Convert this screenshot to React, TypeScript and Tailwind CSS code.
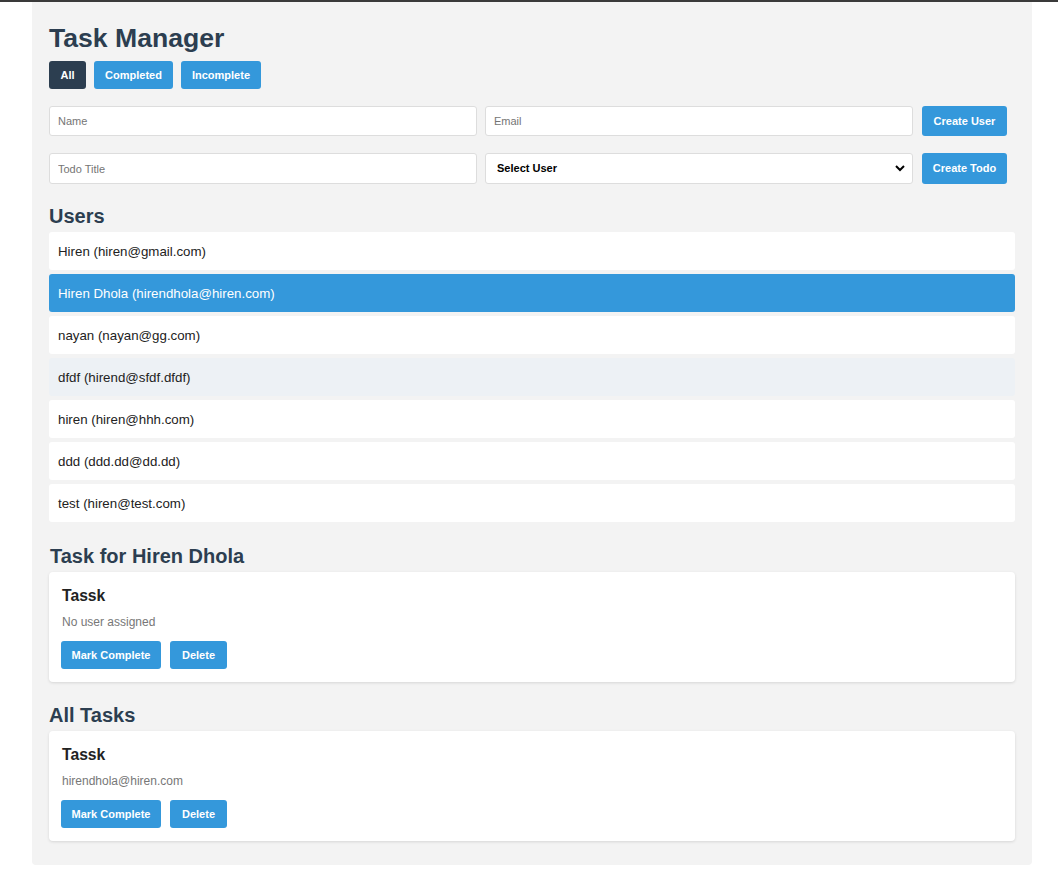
import { useState } from "react";

const users = [
  { name: "Hiren", email: "hiren@gmail.com" },
  { name: "Hiren Dhola", email: "hirendhola@hiren.com" },
  { name: "nayan", email: "nayan@gg.com" },
  { name: "dfdf", email: "hirend@sfdf.dfdf" },
  { name: "hiren", email: "hiren@hhh.com" },
  { name: "ddd", email: "ddd.dd@dd.dd" },
  { name: "test", email: "hiren@test.com" },
];

const btn =
  "h-[28px] rounded-[3px] bg-[#3498db] text-[11px] font-bold text-white";

const filters = [
  { label: "All", w: "w-[37px]" },
  { label: "Completed", w: "w-[79px]" },
  { label: "Incomplete", w: "w-[80px]" },
];

function TaskCard({ title, sub }: { title: string; sub: string }) {
  return (
    <div className="rounded-[4px] bg-white px-[12px] pt-[14px] pb-[13px] shadow-[0_1px_3px_rgba(0,0,0,0.12)]">
      <h3 className="pl-[1px] text-[15.7px] leading-[19px] font-bold text-[#222]">{title}</h3>
      <p className="mt-[10px] pl-[1px] text-[12px] leading-[14px] text-[#777]">{sub}</p>
      <div className="mt-[12px] flex gap-[9px]">
        <button className={btn + " w-[100px]"}>Mark Complete</button>
        <button className={btn + " w-[57px]"}>Delete</button>
      </div>
    </div>
  );
}

export default function App() {
  const [filter, setFilter] = useState("All");
  const [selected, setSelected] = useState(1);

  return (
    <div className="min-h-[881px] border-t-2 border-[#3a3a3a] bg-white font-['Liberation_Sans',Arial,sans-serif]">
      <div className="ml-[32px] w-[1000px] rounded-b-[4px] bg-[#f3f3f3] px-[17px] pt-[20px] pb-[24px]">
        <h1 className="text-[26.6px] leading-[32px] font-bold text-[#2c3e50]">Task Manager</h1>

        <div className="mt-[7px] flex gap-[8px]">
          {filters.map((f) => (
            <button
              key={f.label}
              onClick={() => setFilter(f.label)}
              className={
                "h-[28px] rounded-[3px] text-[11px] font-bold text-white " +
                f.w +
                " " +
                (filter === f.label ? "bg-[#2c3e50]" : "bg-[#3498db]")
              }
            >
              {f.label}
            </button>
          ))}
        </div>

        <div className="mt-[17px] flex items-center">
          <input
            placeholder="Name"
            className="h-[30px] w-[428px] rounded-[3px] border border-[#ddd] bg-white px-[8px] text-[11px] placeholder:text-[#757575]"
          />
          <input
            placeholder="Email"
            className="ml-[8px] h-[30px] w-[428px] rounded-[3px] border border-[#ddd] bg-white px-[8px] text-[11px] placeholder:text-[#757575]"
          />
          <button className="ml-[9px] h-[30px] w-[85px] rounded-[3px] bg-[#3498db] text-[11px] font-bold text-white">
            Create User
          </button>
        </div>

        <div className="mt-[17px] flex items-center">
          <input
            placeholder="Todo Title"
            className="h-[31px] w-[428px] rounded-[3px] border border-[#ddd] bg-white px-[8px] text-[11px] placeholder:text-[#757575]"
          />
          <div className="relative ml-[8px] h-[31px] w-[428px]">
            <select className="h-full w-full appearance-none rounded-[3px] border border-[#ddd] bg-white px-[11px] text-[11px] font-semibold text-black">
              <option>Select User</option>
              {users.map((u) => (
                <option key={u.email}>{u.name}</option>
              ))}
            </select>
            <svg
              className="pointer-events-none absolute top-[11px] right-[8px]"
              width="10"
              height="8"
              viewBox="0 0 10 8"
              fill="none"
            >
              <path d="M1 2l4 4 4-4" stroke="#000" strokeWidth="2" />
            </svg>
          </div>
          <button className="ml-[9px] h-[31px] w-[85px] rounded-[3px] bg-[#3498db] text-[11px] font-bold text-white">
            Create Todo
          </button>
        </div>

        <h2 className="mt-[21px] text-[20px] leading-[23px] font-bold text-[#2c3e50]">Users</h2>
        <ul className="mt-[4px] flex flex-col gap-[4px]">
          {users.map((u, i) => (
            <li
              key={u.email}
              onClick={() => setSelected(i)}
              className={
                "flex h-[38px] cursor-pointer items-center rounded-[3px] px-[9px] pt-[2px] text-[13.3px] " +
                (i === selected
                  ? "bg-[#3498db] text-white"
                  : i === 3
                    ? "bg-[#edf1f5] text-[#222]"
                    : "bg-white text-[#222]")
              }
            >
              {u.name} ({u.email})
            </li>
          ))}
        </ul>

        <h2 className="mt-[23px] pl-[1px] text-[20px] leading-[23px] font-bold text-[#2c3e50]">
          Task for {users[selected].name}
        </h2>
        <div className="mt-[4px]">
          <TaskCard title="Tassk" sub="No user assigned" />
        </div>

        <h2 className="mt-[22px] text-[20px] leading-[23px] font-bold text-[#2c3e50]">All Tasks</h2>
        <div className="mt-[4px]">
          <TaskCard title="Tassk" sub="hirendhola@hiren.com" />
        </div>
      </div>
    </div>
  );
}
